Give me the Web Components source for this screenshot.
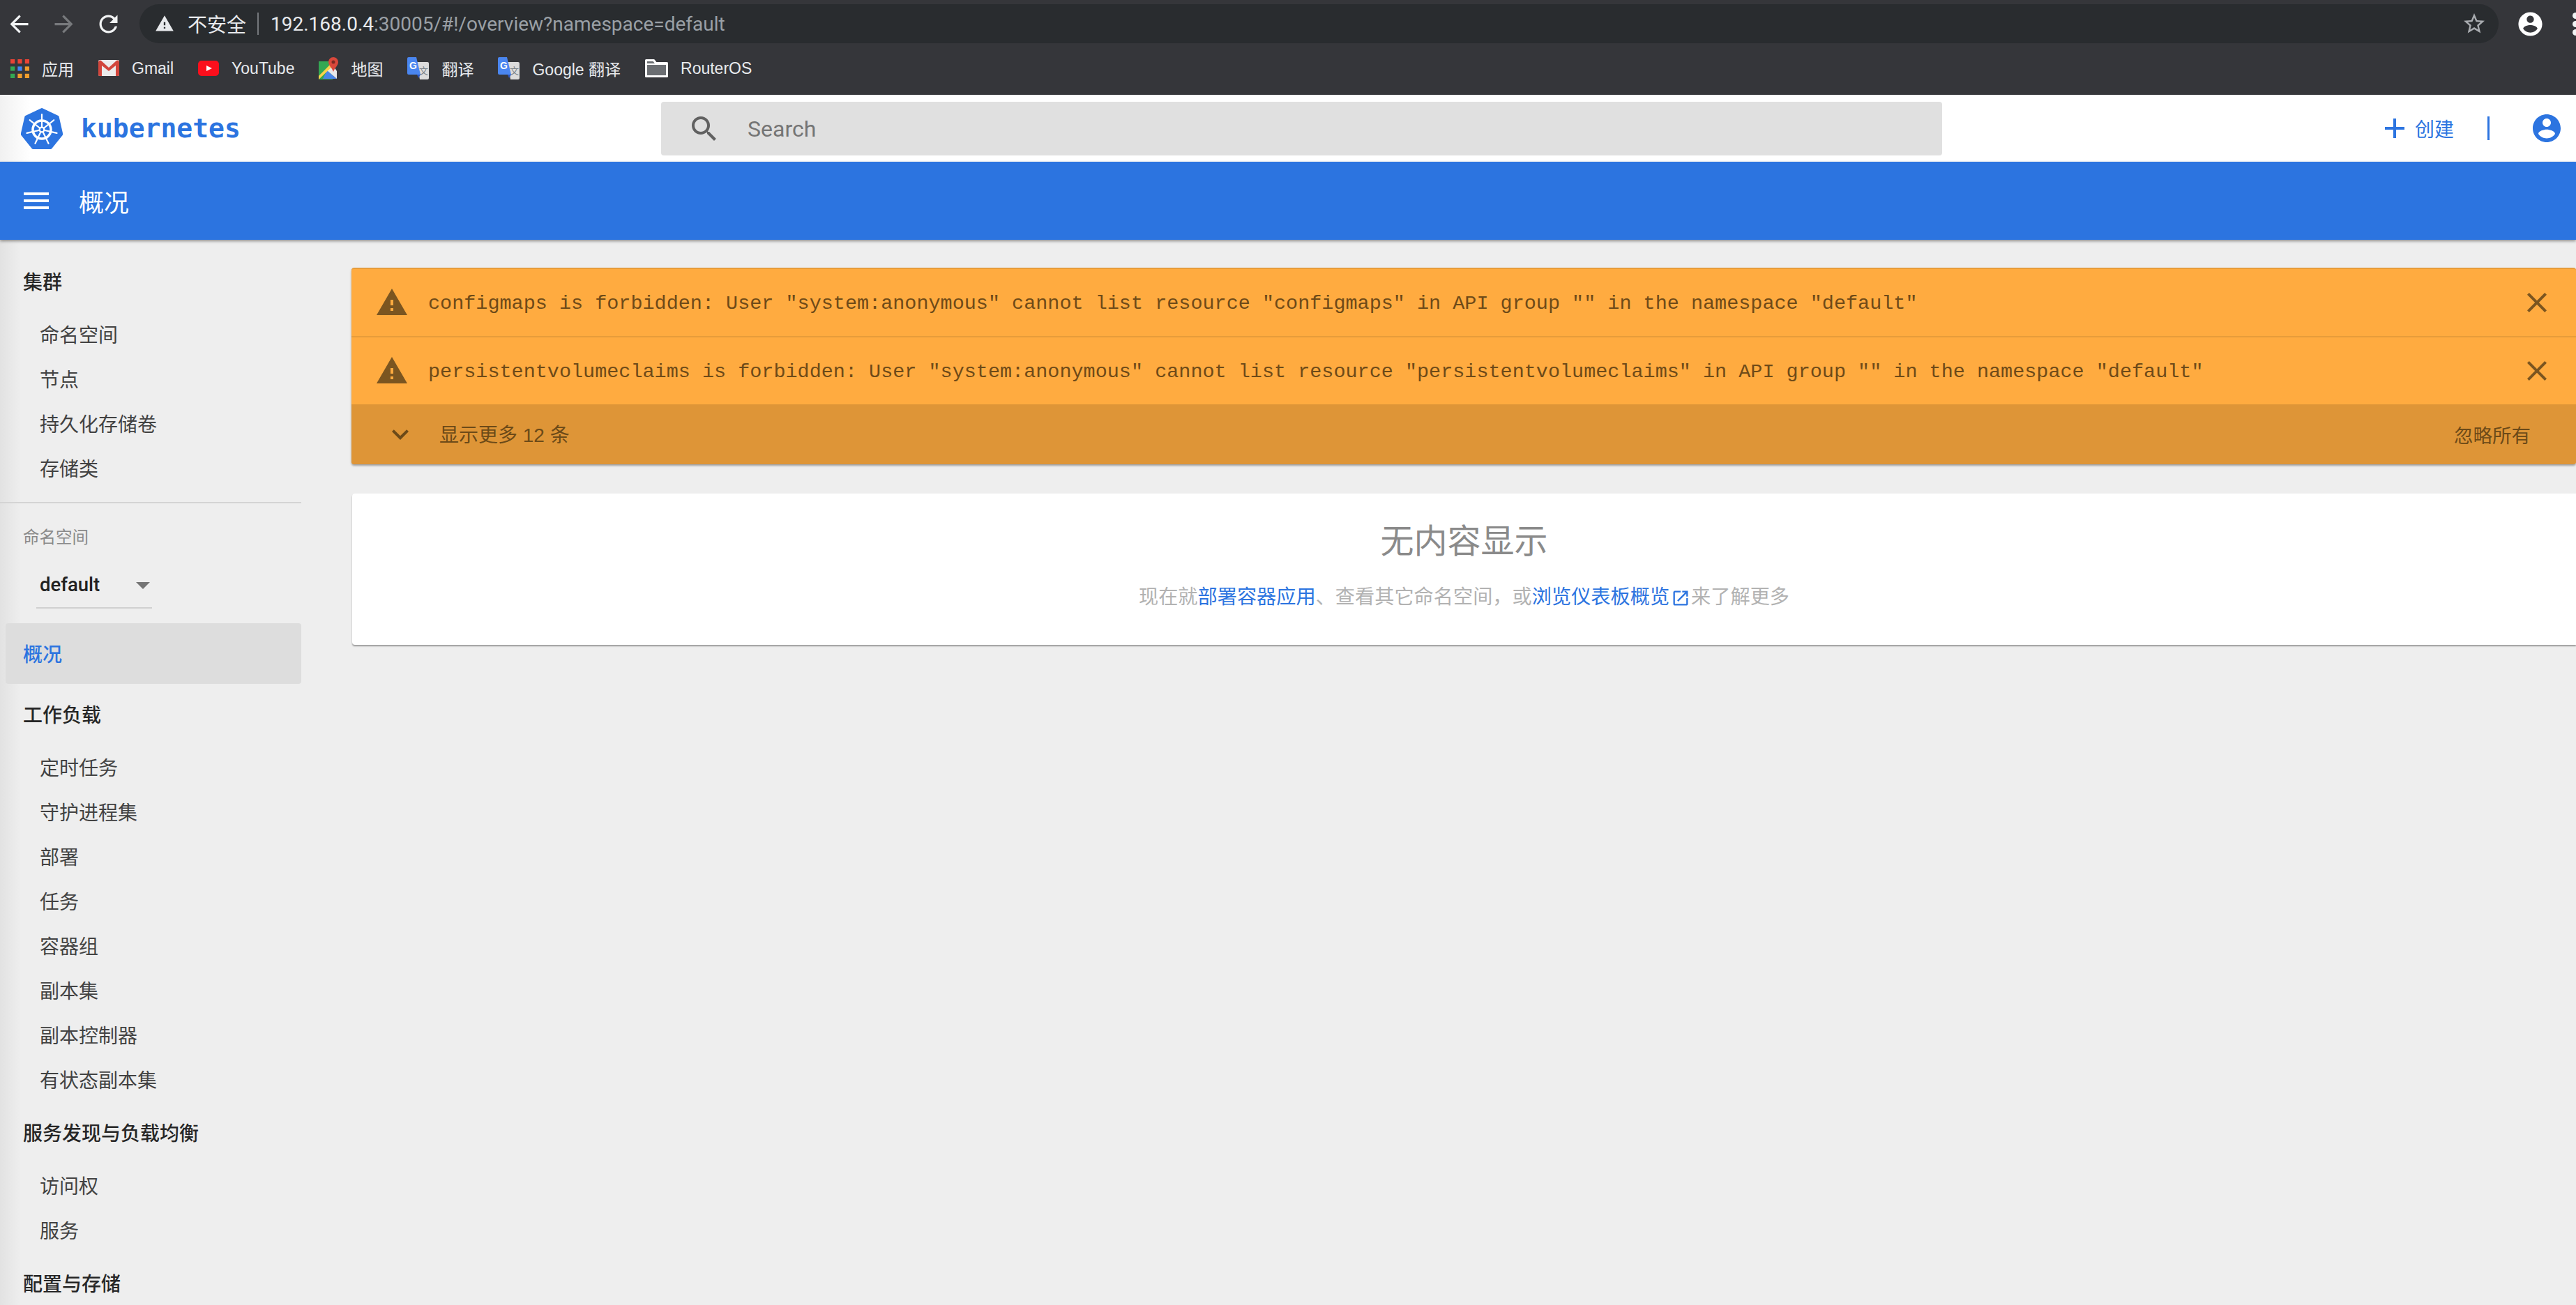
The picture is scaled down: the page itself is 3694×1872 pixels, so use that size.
<!DOCTYPE html>
<html lang="zh-CN">

<head>
    <meta charset="utf-8">
    <title>Kubernetes Dashboard</title>
    <style>
    html, body {
        margin: 0;
        width: 3694px;
        height: 1872px;
        overflow: hidden;
        background: #eeeeee;
        font-family: "Liberation Sans", "Noto Sans CJK SC", sans-serif;
    }
    </style>
</head>

<body>
    <browser-chrome></browser-chrome>
    <kube-header></kube-header>
    <action-bar>概况</action-bar>
    <page-body>
        <kube-sidebar slot="side">
            <nav-heading>集群</nav-heading>
            <nav-list>
                <nav-item>命名空间</nav-item>
                <nav-item>节点</nav-item>
                <nav-item>持久化存储卷</nav-item>
                <nav-item>存储类</nav-item>
            </nav-list>
            <namespace-select></namespace-select>
            <nav-active>概况</nav-active>
            <nav-heading>工作负载</nav-heading>
            <nav-list>
                <nav-item>定时任务</nav-item>
                <nav-item>守护进程集</nav-item>
                <nav-item>部署</nav-item>
                <nav-item>任务</nav-item>
                <nav-item>容器组</nav-item>
                <nav-item>副本集</nav-item>
                <nav-item>副本控制器</nav-item>
                <nav-item>有状态副本集</nav-item>
            </nav-list>
            <nav-heading>服务发现与负载均衡</nav-heading>
            <nav-list>
                <nav-item>访问权</nav-item>
                <nav-item>服务</nav-item>
            </nav-list>
            <nav-heading>配置与存储</nav-heading>
        </kube-sidebar>
        <alert-panel>
            <alert-row>configmaps is forbidden: User "system:anonymous" cannot list resource "configmaps" in API group "" in the namespace "default"</alert-row>
            <alert-row>persistentvolumeclaims is forbidden: User "system:anonymous" cannot list resource "persistentvolumeclaims" in API group "" in the namespace "default"</alert-row>
        </alert-panel>
        <empty-card></empty-card>
    </page-body>

    <script>
    const CJK = '"Noto Sans CJK SC", sans-serif';
    const BLUE = '#2c74e0';

    class ShadowElement extends HTMLElement {
        constructor() {
            super();
            this.attachShadow({ mode: 'open' }).innerHTML = this.constructor.markup;
        }
    }

    class BrowserChrome extends ShadowElement {
        static markup = `
        <style>
            :host { display: block; height: 136px; background: #35363a; color: #e8eaed; font-family: "Liberation Sans", ${CJK}; }
            svg { display: block; flex: none; }
            .top { height: 68px; display: flex; align-items: center; padding-left: 8px; gap: 25px; overflow: hidden; }
            .omni { flex: none; width: 3383px; height: 56px; border-radius: 28px; background: #292c2f; display: flex; align-items: center; padding: 0 17px 0 22px; box-sizing: border-box; font-size: 28px; }
            .insecure { margin-left: 19px; font-family: ${CJK}; line-height: 1; }
            .sep { width: 2px; height: 32px; background: #75787c; margin: 0 17px 0 16px; }
            .url { font-family: Roboto, sans-serif; font-size: 28px; color: #9aa0a6; flex: 1; }
            .url b { font-weight: 400; color: #e8eaed; }
            .dots { display: grid; gap: 3px; margin-left: 15px; }
            .dots i { display: block; width: 9px; height: 9px; border-radius: 50%; background: #f1f3f4; }
            .marks { height: 68px; display: flex; align-items: center; padding: 0 0 8px 15px; box-sizing: border-box; gap: 35px; font-size: 23px; }
            .mark { display: flex; align-items: center; gap: 18px; }
        </style>
        <div class="top">
            <svg width="39" height="39" viewBox="0 0 24 24" fill="#f1f3f4"><path d="M20 11H7.830l5.590-5.590L12 4l-8 8 8 8 1.410-1.410L7.830 13H20v-2z"/></svg>
            <svg width="39" height="39" viewBox="0 0 24 24" fill="#77797c"><path d="M12 4l-1.410 1.410L16.170 11H4v2h12.170l-5.580 5.590L12 20l8-8z"/></svg>
            <svg width="39" height="39" viewBox="0 0 24 24" fill="#f1f3f4"><path d="M17.650 6.350C16.200 4.900 14.210 4 12 4c-4.420 0-7.990 3.580-7.990 8s3.570 8 7.990 8c3.730 0 6.840-2.550 7.730-6h-2.080c-.820 2.330-3.040 4-5.650 4-3.310 0-6-2.690-6-6s2.690-6 6-6c1.660 0 3.140.690 4.220 1.780L13 11h7V4l-2.350 2.350z"/></svg>
            <div class="omni">
                <svg width="28" height="28" viewBox="0 0 24 24" fill="#e8eaed"><path d="M1 21h22L12 2 1 21zm12-3h-2v-2h2v2zm0-4h-2v-4h2v4z"/></svg>
                <span class="insecure">不安全</span>
                <span class="sep"></span>
                <span class="url"><b>192.168.0.4</b>:30005/#!/overview?namespace=default</span>
                <svg width="36" height="36" viewBox="0 0 24 24" fill="#a9acb0"><path d="M22 9.240l-7.190-.620L12 2 9.190 8.630 2 9.240l5.460 4.730L5.820 21 12 17.270 18.180 21l-1.630-7.030L22 9.240zM12 15.400l-3.760 2.270 1-4.280-3.320-2.880 4.380-.380L12 6.100l1.710 4.040 4.380.380-3.320 2.880 1 4.280L12 15.400z"/></svg>
            </div>
            <svg width="41" height="41" viewBox="0 0 24 24" fill="#fff"><path d="M12 2C6.480 2 2 6.480 2 12s4.480 10 10 10 10-4.480 10-10S17.520 2 12 2zm0 3c1.660 0 3 1.340 3 3s-1.340 3-3 3-3-1.340-3-3 1.340-3 3-3zm0 14.200c-2.500 0-4.710-1.280-6-3.220.030-1.990 4-3.080 6-3.080 1.990 0 5.970 1.090 6 3.080-1.290 1.940-3.500 3.220-6 3.220z"/></svg>
            <div class="dots"><i></i><i></i><i></i></div>
        </div>
        <div class="marks">
            <div class="mark">
                <svg width="27" height="27" viewBox="0 0 26 26"><g fill="#ea4335"><rect width="6" height="6"/><rect x="10" width="6" height="6"/><rect x="20" width="6" height="6"/></g><rect y="10" width="6" height="6" fill="#34a853"/><rect x="10" y="10" width="6" height="6" fill="#4285f4"/><rect x="20" y="10" width="6" height="6" fill="#f09d2c"/><rect y="20" width="6" height="6" fill="#34a853"/><rect x="10" y="20" width="6" height="6" fill="#f09d2c"/><rect x="20" y="20" width="6" height="6" fill="#f09d2c"/></svg>
                <span>应用</span>
            </div>
            <div class="mark">
                <svg width="30" height="24" viewBox="0 0 30 24"><rect width="30" height="23" rx="2" fill="#ececec"/><path d="M0 3v18a2 2 0 0 0 2 2h3V8l10 8 10-8v15h3a2 2 0 0 0 2-2V3a2.500 2.500 0 0 0-4-2L15 11 4 1a2.500 2.500 0 0 0-4 2z" fill="#d2463c"/></svg>
                <span>Gmail</span>
            </div>
            <div class="mark">
                <svg width="30" height="22" viewBox="0 0 30 22"><rect width="30" height="22" rx="5" fill="#fb0f1c"/><path d="M12 7l8 4-8 4z" fill="#fff"/></svg>
                <span>YouTube</span>
            </div>
            <div class="mark">
                <svg width="28" height="32" viewBox="0 0 28 32"><path d="M0 6h20v26H2a2 2 0 0 1-2-2z" fill="#34a853"/><path d="M12 19L26 31H6z" fill="#4a86e8"/><path d="M12 19l8-8 6 9v11z" fill="#e8e8e8"/><path d="M0 27L18 9l3 3L0 32z" fill="#fbd34b"/><path d="M21 0a7 7 0 0 1 7 7c0 5-5 8-7 14-2-6-7-9-7-14a7 7 0 0 1 7-7z" fill="#d9483b"/><circle cx="21" cy="7" r="2.500" fill="#7c2a22"/></svg>
                <span>地图</span>
            </div>
            <div class="mark">
                <translate-mark></translate-mark>
                <span>翻译</span>
            </div>
            <div class="mark">
                <translate-mark></translate-mark>
                <span>Google 翻译</span>
            </div>
            <div class="mark">
                <svg width="33" height="26" viewBox="0 0 33 26"><path d="M1.500 1.500h11l3 4h16v19h-30z" fill="#6b6e72" stroke="#fff" stroke-width="3" stroke-linejoin="round"/><path d="M3 7h27" stroke="#fff" stroke-width="2"/></svg>
                <span>RouterOS</span>
            </div>
        </div>`;
    }

    class TranslateMark extends ShadowElement {
        static markup = `
        <style>:host { display: block; width: 31px; height: 32px; } svg { display: block; }</style>
        <svg width="31" height="32" viewBox="0 0 31 32">
            <path d="M14 7h15a2 2 0 0 1 2 2v21a2 2 0 0 1-2 2H18z" fill="#dcdcdc"/>
            <text x="17" y="24" font-size="13" font-family="Noto Sans CJK SC" fill="#7a8288">文</text>
            <path d="M2 0h11l6 25H2a2 2 0 0 1-2-2V2a2 2 0 0 1 2-2z" fill="#4a86f0"/>
            <path d="M14 25h5l-3 5z" fill="#2a56c0"/>
            <text x="3" y="17" font-size="14" font-weight="700" font-family="Liberation Sans" fill="#fff">G</text>
        </svg>`;
    }

    class KubeHeader extends ShadowElement {
        static markup = `
        <style>
            :host { display: grid; grid-template-columns: 948px 1837px 1fr; height: 96px; align-items: center; background: linear-gradient(90deg, #f1f1f1, #fff 44px); }
            svg { display: block; flex: none; }
            .brand { display: flex; align-items: center; gap: 26px; padding-left: 30px; color: ${BLUE}; font: 700 38px "DejaVu Sans Mono", monospace; }
            .search { height: 77px; display: flex; align-items: center; gap: 38px; padding-left: 38px; margin-top: 1px; background: #e0e0e0; border-radius: 4px; font: 400 32px Roboto, sans-serif; color: #757575; }
            .actions { display: flex; align-items: center; justify-content: flex-end; padding-right: 18px; color: ${BLUE}; font: 400 28px ${CJK}; }
            .create { display: flex; align-items: center; gap: 5px; }
            .bar { width: 3px; height: 34px; background: ${BLUE}; margin: 0 58px 0 48px; }
        </style>
        <div class="brand">
            <svg width="60" height="61" viewBox="0 0 60 61">
                <polygon points="30,3 52.700,13.900 58.300,38.500 42.600,58.100 17.400,58.100 1.700,38.500 7.300,13.900" fill="${BLUE}" stroke="${BLUE}" stroke-width="4" stroke-linejoin="round"/>
                <g fill="none" stroke="#fff" stroke-linecap="round">
                    <circle cx="30" cy="32" r="13" stroke-width="3.500"/>
                    <g stroke-width="2.200">
                        <path d="M30 32V10"/>
                        <path d="M30 32V10" transform="rotate(51.430 30 32)"/>
                        <path d="M30 32V10" transform="rotate(102.860 30 32)"/>
                        <path d="M30 32V10" transform="rotate(154.290 30 32)"/>
                        <path d="M30 32V10" transform="rotate(205.710 30 32)"/>
                        <path d="M30 32V10" transform="rotate(257.140 30 32)"/>
                        <path d="M30 32V10" transform="rotate(308.570 30 32)"/>
                    </g>
                </g>
                <circle cx="30" cy="32" r="4.500" fill="#fff"/>
                <circle cx="30" cy="32" r="2.200" fill="${BLUE}"/>
            </svg>
            <span>kubernetes</span>
        </div>
        <div class="search">
            <svg width="48" height="48" viewBox="0 0 24 24" fill="#616161"><path d="M15.500 14h-.790l-.280-.270C15.410 12.590 16 11.110 16 9.500 16 5.910 13.090 3 9.500 3S3 5.910 3 9.500 5.910 16 9.500 16c1.610 0 3.090-.590 4.230-1.570l.270.280v.790l5 4.990L20.490 19l-4.990-5zm-6 0C7.010 14 5 11.990 5 9.500S7.010 5 9.500 5 14 7.010 14 9.500 11.990 14 9.500 14z"/></svg>
            <span>Search</span>
        </div>
        <div class="actions">
            <div class="create">
                <svg width="48" height="48" viewBox="0 0 24 24" fill="${BLUE}"><path d="M19 13h-6v6h-2v-6H5v-2h6V5h2v6h6v2z"/></svg>
                <span>创建</span>
            </div>
            <span class="bar"></span>
            <svg width="48" height="48" viewBox="0 0 24 24" fill="${BLUE}"><path d="M12 2C6.480 2 2 6.480 2 12s4.480 10 10 10 10-4.480 10-10S17.520 2 12 2zm0 3c1.660 0 3 1.340 3 3s-1.340 3-3 3-3-1.340-3-3 1.340-3 3-3zm0 14.200c-2.500 0-4.710-1.280-6-3.220.030-1.990 4-3.080 6-3.080 1.990 0 5.970 1.090 6 3.080-1.290 1.940-3.500 3.220-6 3.220z"/></svg>
        </div>`;
    }

    class ActionBar extends ShadowElement {
        static markup = `
        <style>
            :host { display: flex; position: relative; height: 112px; align-items: center; gap: 37px; padding-left: 28px; background: ${BLUE}; color: #fff; font: 400 36px ${CJK}; box-shadow: 0 2px 4px rgba(0,0,0,.4); }
            svg { display: block; }
        </style>
        <svg width="48" height="48" viewBox="0 0 24 24" fill="#fff"><path d="M3 18h18v-2H3v2zm0-5h18v-2H3v2zm0-7v2h18V6H3z"/></svg>
        <slot></slot>`;
    }

    class PageBody extends ShadowElement {
        static markup = `
        <style>
            :host { display: grid; grid-template-columns: 504px 1fr; height: 1528px; overflow: hidden; }
            main { display: flex; flex-direction: column; gap: 42px; padding-top: 40px; min-width: 0; }
        </style>
        <slot name="side"></slot>
        <main><slot></slot></main>`;
    }

    class KubeSidebar extends ShadowElement {
        static markup = `
        <style>
            :host { display: block; padding-top: 28px; background: linear-gradient(90deg, #e2e2e2, #eee 30px); font-family: ${CJK}; }
        </style>
        <slot></slot>`;
    }

    class NavHeading extends ShadowElement {
        static markup = `
        <style>
            :host { display: flex; align-items: center; height: 64px; box-sizing: border-box; padding: 0 0 3px 33px; font-size: 28px; font-weight: 500; color: #262626; }
        </style>
        <slot></slot>`;
    }

    class NavList extends ShadowElement {
        static markup = `
        <style>:host { display: block; margin: 12px 0; }</style>
        <slot></slot>`;
    }

    class NavItem extends ShadowElement {
        static markup = `
        <style>
            :host { display: flex; align-items: center; height: 64px; box-sizing: border-box; padding: 0 0 3px 57px; font-size: 28px; color: #424242; }
        </style>
        <slot></slot>`;
    }

    class NavActive extends ShadowElement {
        static markup = `
        <style>
            :host { display: flex; align-items: center; height: 87px; width: 424px; box-sizing: border-box; margin: 21px 0 12px 8px; padding: 0 0 2px 25px; border-radius: 4px; background: #dddddd; color: ${BLUE}; font-size: 28px; font-weight: 500; }
        </style>
        <slot></slot>`;
    }

    class NamespaceSelect extends ShadowElement {
        static markup = `
        <style>
            :host { display: block; width: 432px; border-top: 2px solid #d4d4d4; margin-top: 16px; }
            .label { padding: 32px 0 0 33px; height: 36px; line-height: 30px; font-size: 23.500px; color: #8a8a8a; }
            .field { display: flex; align-items: center; justify-content: space-between; width: 166px; height: 67px; box-sizing: border-box; margin: 16px 0 0 52px; padding: 0 3px 0 5px; border-bottom: 2px solid #d0d0d0; }
            .value { font: 500 27.500px Roboto, sans-serif; color: #212121; }
            .caret { width: 0; height: 0; border: 10px solid transparent; border-top-color: #757575; border-bottom: 0; margin-top: 2px; }
        </style>
        <div class="label">命名空间</div>
        <div class="field"><span class="value">default</span><span class="caret"></span></div>`;
    }

    class AlertPanel extends ShadowElement {
        static markup = `
        <style>
            :host { display: block; border-radius: 4px; background: #ffab40; box-shadow: 0 2px 3px rgba(0,0,0,.35); border-top: 2px solid #e79c3a; color: #6e4a18; overflow: hidden; }
            svg { display: block; }
            .more { display: flex; align-items: center; gap: 32px; height: 86px; box-sizing: border-box; padding: 0 65px 0 46px; background: #de9537; color: #6c4a18; font: 400 28px "Liberation Sans", ${CJK}; }
            .more .grow { flex: 1; padding-bottom: 3px; }
            .more .all { font-size: 27.500px; }
        </style>
        <slot></slot>
        <div class="more">
            <svg width="48" height="48" viewBox="0 0 24 24" fill="#6c4a18"><path d="M16.590 8.590L12 13.170 7.410 8.590 6 10l6 6 6-6z"/></svg>
            <span class="grow">显示更多 12 条</span>
            <span class="all">忽略所有</span>
        </div>`;
    }

    class AlertRow extends ShadowElement {
        static markup = `
        <style>
            :host { display: flex; align-items: center; gap: 28px; height: 96px; padding: 0 32px 0 34px; font: 400 28.470px "Liberation Mono", monospace; color: #6e4a18; }
            :host(:not(:last-child)) { border-bottom: 2px solid #e79c3a; }
            svg { display: block; flex: none; }
            .text { flex: 1; white-space: pre; padding-top: 3px; }
        </style>
        <svg width="48" height="48" viewBox="0 0 24 24" fill="#7b5520"><path d="M1 21h22L12 2 1 21zm12-3h-2v-2h2v2zm0-4h-2v-4h2v4z"/></svg>
        <div class="text"><slot></slot></div>
        <svg width="48" height="48" viewBox="0 0 24 24" fill="#7b5520"><path d="M19 6.410L17.590 5 12 10.590 6.410 5 5 6.410 10.590 12 5 17.590 6.410 19 12 13.410 17.590 19 19 17.590 13.410 12z"/></svg>`;
    }

    class EmptyCard extends ShadowElement {
        static markup = `
        <style>
            :host { display: flex; flex-direction: column; align-items: center; height: 217px; box-sizing: border-box; padding-top: 29px; margin-left: 1px; background: #fff; border-radius: 4px 0 0 4px; box-shadow: 0 2px 2px rgba(0,0,0,.35); font-family: ${CJK}; }
            .title { font-size: 48px; line-height: 70px; color: #8a8a8a; }
            .sub { display: flex; align-items: center; margin-top: 26px; font-size: 28.200px; line-height: 42px; color: #b2b2b2; }
            a { color: ${BLUE}; text-decoration: none; }
            svg { display: block; margin: 8px 1px 0 2px; }
        </style>
        <div class="title">无内容显示</div>
        <div class="sub">
            <span>现在就</span><a href="#">部署容器应用</a><span>、查看其它命名空间\uFF0C或</span><a href="#">浏览仪表板概览</a><svg width="28" height="28" viewBox="0 0 24 24" fill="${BLUE}"><path d="M19 19H5V5h7V3H5c-1.110 0-2 .900-2 2v14c0 1.100.890 2 2 2h14c1.100 0 2-.900 2-2v-7h-2v7zM14 3v2h3.590l-9.830 9.830 1.410 1.410L19 6.410V10h2V3h-7z"/></svg><span>来了解更多</span>
        </div>`;
    }

    customElements.define('browser-chrome', BrowserChrome);
    customElements.define('translate-mark', TranslateMark);
    customElements.define('kube-header', KubeHeader);
    customElements.define('action-bar', ActionBar);
    customElements.define('page-body', PageBody);
    customElements.define('kube-sidebar', KubeSidebar);
    customElements.define('nav-heading', NavHeading);
    customElements.define('nav-list', NavList);
    customElements.define('nav-item', NavItem);
    customElements.define('nav-active', NavActive);
    customElements.define('namespace-select', NamespaceSelect);
    customElements.define('alert-panel', AlertPanel);
    customElements.define('alert-row', AlertRow);
    customElements.define('empty-card', EmptyCard);
    </script>
</body>

</html>
